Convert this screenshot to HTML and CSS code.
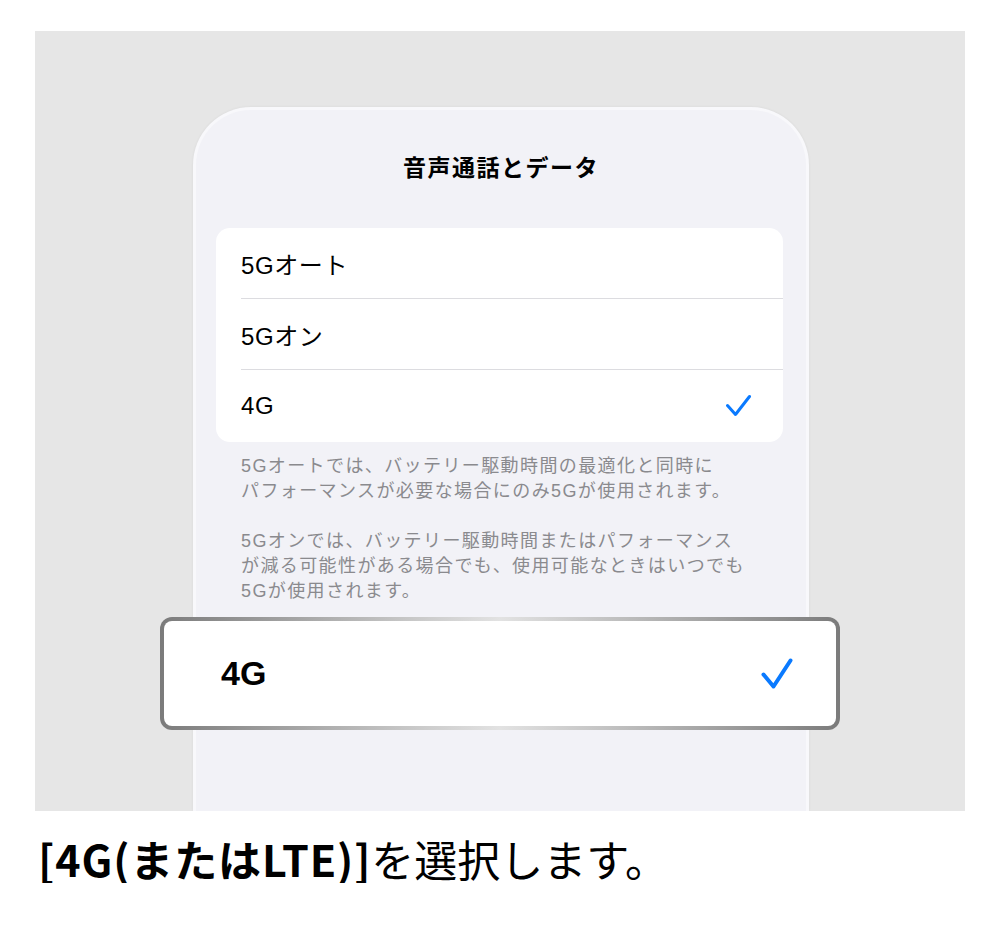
FILE: index.html
```html
<!DOCTYPE html>
<html lang="ja">
<head>
    <meta charset="UTF-8">
    <meta name="viewport" content="width=device-width, initial-scale=1.0">
    <title>音声通話とデータ</title>
    <link rel="stylesheet" href="styles.css">
</head>
<body>

<div class="stage">
    <div class="phone">
        <h2 class="title">音声通話とデータ</h2>

        <div class="card">
            <div class="row"><span>5Gオート</span></div>
            <div class="row"><span>5Gオン</span></div>
            <div class="row">
                <span>4G</span>
                <svg class="check" width="26" height="24" viewBox="0 0 26 24">
                    <polyline points="1.5,11.5 9.5,20.5 23.5,2.5" />
                </svg>
            </div>
        </div>

        <p class="note">5Gオートでは、バッテリー駆動時間の最適化と同時に<br>パフォーマンスが必要な場合にのみ5Gが使用されます。</p>
        <p class="note">5Gオンでは、バッテリー駆動時間またはパフォーマンス<br>が減る可能性がある場合でも、使用可能なときはいつでも<br>5Gが使用されます。</p>
    </div>

    <!-- enlarged copy of the selected row -->
    <div class="zoom">
        <div class="zoom-inner">
            <span>4G</span>
            <svg class="check-big" width="33" height="32" viewBox="0 0 33 32">
                <polyline points="2.5,16.5 12.5,28.5 29.5,2.5" />
            </svg>
        </div>
    </div>
</div>

<p class="caption"><b>[4G(またはLTE)]</b>を選択します。</p>

</body>
</html>
```

FILE: styles.css
```css
body {
    margin: 0;
    background: #fff;
    font-family: "Liberation Sans", "Noto Sans CJK JP", sans-serif;
    color: #000;
}
.stage {
    position: relative;
    margin: 31px 35px 0;
    height: 704px;
    padding-top: 76px;
    background: #e6e6e6;
    overflow: hidden;
    display: flex;
    justify-content: center;
}
.phone {
    width: 610px;
    margin-left: 2px;
    border: 3px solid #f8f8fb;
    border-bottom: none;
    border-radius: 58px 58px 0 0;
    background: #f2f2f7;
    box-shadow: 0 0 3px rgba(0, 0, 0, 0.06);
}
.title {
    margin: 43px 0 0;
    font-size: 23px;
    line-height: 30px;
    font-weight: bold;
    letter-spacing: 1.5px;
    text-align: center;
}
.card {
    width: 567px;
    margin: 45px 0 0 20px;
    background: #fff;
    border-radius: 14px;
}
.row {
    height: 70px;
    margin-left: 25px;
    padding-right: 31px;
    border-bottom: 1px solid #dcdce0;
    display: flex;
    align-items: center;
    justify-content: space-between;
    font-size: 24px;
    letter-spacing: 0.6px;
}
.row:last-child {
    border-bottom: none;
    height: 72px;
}
.check polyline, .check-big polyline {
    fill: none;
    stroke: #0a7aff;
    stroke-linecap: round;
    stroke-linejoin: round;
}
.check polyline {
    stroke-width: 3;
}
.check-big polyline {
    stroke-width: 4;
}
.note {
    margin: 12px 0 25px 45px;
    font-size: 18px;
    line-height: 25px;
    letter-spacing: 1.4px;
    color: #8a8a8e;
}
.zoom {
    position: absolute;
    left: 125px;
    top: 586px;
    width: 680px;
    height: 113px;
    box-sizing: border-box;
    padding: 4px;
    border-radius: 12px;
    background: linear-gradient(to right, #7b7b7b, #c4c4c4 35%, #e2e2e2 50%, #c4c4c4 65%, #7b7b7b);
}
.zoom-inner {
    height: 100%;
    border-radius: 8px;
    background: #fff;
    display: flex;
    align-items: center;
    justify-content: space-between;
    padding: 0 42px 0 57px;
    font-size: 34px;
    font-weight: bold;
}
.caption {
    margin: 22px 0 0 38px;
    font-family: "Noto Sans CJK JP", sans-serif;
    font-size: 43px;
    line-height: 50px;
}
.caption b {
    letter-spacing: 0.9px;
}
```
